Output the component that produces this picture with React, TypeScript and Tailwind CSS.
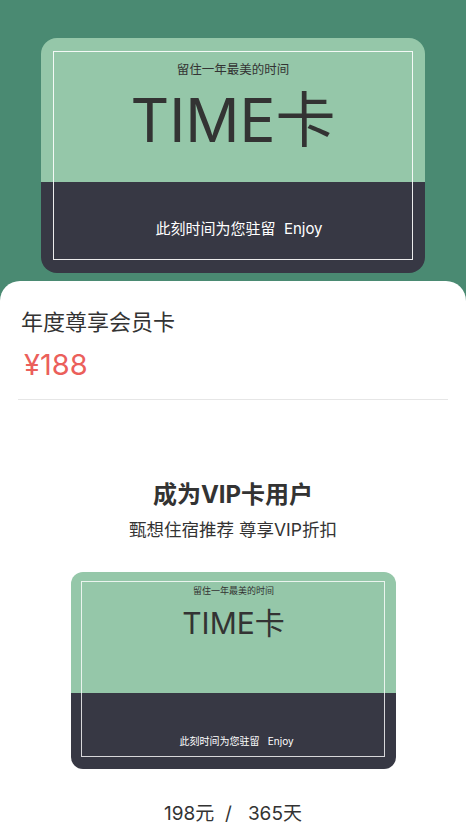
import React from 'react';

type CardProps = {
  big?: boolean;
};

const TimeCard = ({ big }: CardProps) => {
  if (big) {
    return (
      <div className="relative w-[384px] h-[235px] rounded-[16px] overflow-hidden flex flex-col">
        <div className="h-[144px] bg-[#95c7a9] flex flex-col items-center text-[#333333]">
          <div className="pt-[24px] text-[12.5px] leading-[16px]">留住一年最美的时间</div>
          <div className="mt-[11px] text-[60px] leading-[62px]">TIME卡</div>
        </div>
        <div className="flex-1 bg-[#373844] flex flex-col items-center">
          <div className="pt-[37px] pl-[12px] text-[15px] leading-[20px] text-white">此刻时间为您驻留&nbsp;&nbsp;Enjoy</div>
        </div>
        <div className="absolute left-[12px] top-[13px] right-[12px] bottom-[13px] border border-white/90"></div>
      </div>
    );
  }
  return (
    <div className="relative w-[325px] h-[197px] rounded-[12px] overflow-hidden flex flex-col">
      <div className="h-[121px] bg-[#95c7a9] flex flex-col items-center text-[#333333]">
        <div className="pt-[13px] text-[9px] leading-[12px]">留住一年最美的时间</div>
        <div className="mt-[9px] text-[30px] leading-[34px]">TIME卡</div>
      </div>
      <div className="flex-1 bg-[#373844] flex flex-col items-center">
        <div className="pt-[41px] pl-[6px] text-[10px] leading-[14px] text-white">此刻时间为您驻留&nbsp;&nbsp;&nbsp;Enjoy</div>
      </div>
      <div className="absolute left-[10px] top-[9px] right-[11px] bottom-[12px] border border-white/80"></div>
    </div>
  );
};

export default function App() {
  return (
    <div
      className="w-[466px] min-h-[825px] bg-[#4a8a72] flex flex-col"
      style={{ fontFamily: 'Inter, "Noto Sans CJK SC", sans-serif' }}>
      <div className="h-[281px] pt-[38px] pl-[41px]">
        <TimeCard big />
      </div>
      <div className="flex-1 bg-white rounded-t-[20px] flex flex-col">
        <div className="px-[21px] pt-[26px] text-[22px] leading-[30px] text-[#333333]">年度尊享会员卡</div>
        <div className="px-[24px] pt-[10px] text-[29px] leading-[36px] text-[#eb5f5b]">¥188</div>
        <div className="mx-[18px] mt-[16px] h-px bg-[#e6e6e6]"></div>
        <div className="pt-[79px] flex flex-col items-center text-[#333333]">
          <div className="text-[24px] leading-[32px] font-bold">成为VIP卡用户</div>
          <div className="pt-[7px] text-[17.5px] leading-[24px]">甄想住宿推荐 尊享VIP折扣</div>
        </div>
        <div className="pt-[30px] pl-[71px]">
          <TimeCard />
        </div>
        <div className="pt-[32px] pb-[20px] text-center text-[19px] leading-[26px] text-[#333333]">
          198元&nbsp;&nbsp;/&nbsp;&nbsp;&nbsp;365天
        </div>
      </div>
    </div>
  );
}
